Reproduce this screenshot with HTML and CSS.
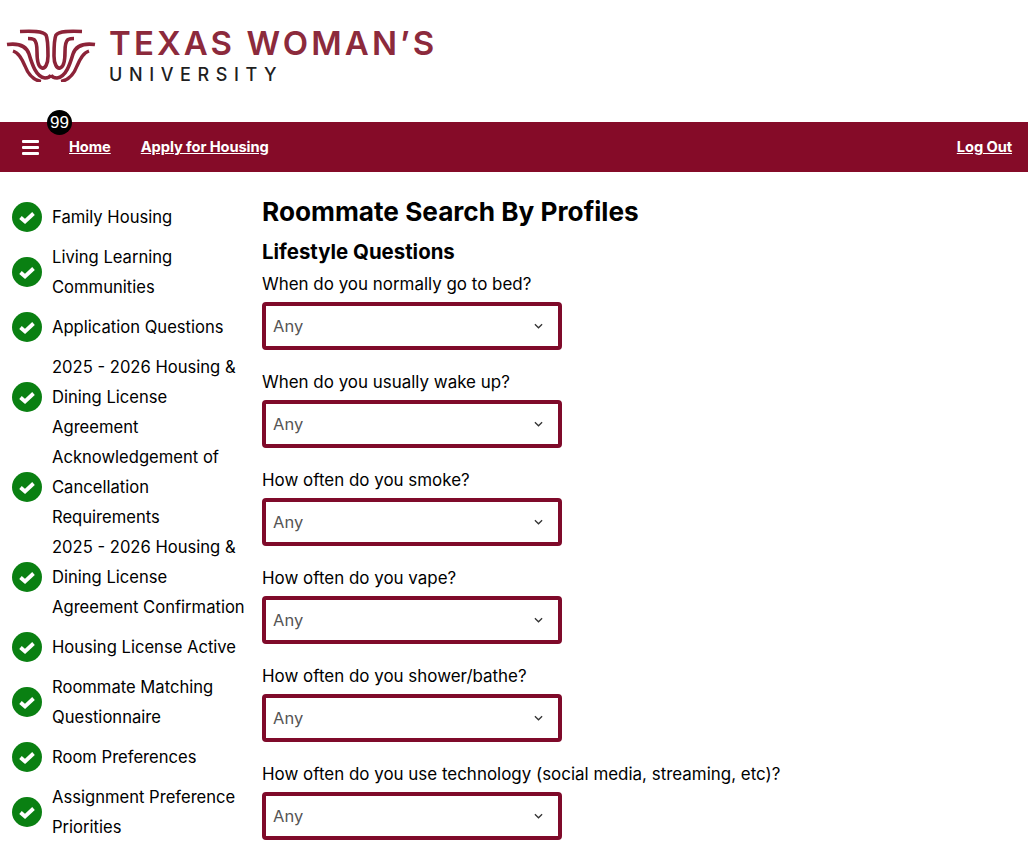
FILE: index.html
```html
<!DOCTYPE html>
<html lang="en">
<head>
<meta charset="utf-8">
<title>Roommate Search By Profiles</title>
<link rel="stylesheet" href="styles.css">
</head>
<body>
<header class="brand">
  <svg class="mark" viewBox="0 0 102 60" width="102" height="60" aria-hidden="true">
    <defs>
      <g id="half" fill="none" stroke="#8c2338" stroke-width="3.600">
        <path d="M20 9.500 C32 9 43 9 46 13 C48 17 48 26 48 34 C48 42 45 47 42 46 C38 45 37 38 37 30 C37 23 36 19 34 17.500 C32 16.500 31 16.500 28 16.500"/>
        <path d="M7 22.500 C18 21 26 23 29 32 C32 42 36 55 45 56 C48 56 50 55 51 53"/>
        <path d="M13 29 C19 31 22 37 25 44 C28 52 33 58 41 59.500" stroke-width="3.400"/>
      </g>
    </defs>
    <use href="#half"/>
    <use href="#half" transform="matrix(-1 0 0 1 102 0)"/>
  </svg>
  <div class="wordmark">
    <div class="wm-top">TEXAS WOMAN’S</div>
    <div class="wm-sub">UNIVERSITY</div>
  </div>
</header>
<nav class="navbar">
  <div class="menu">
    <span class="burger"><i></i><i></i><i></i></span>
    <span class="badge">99</span>
  </div>
  <a class="navlink" href="#">Home</a>
  <a class="navlink" href="#">Apply for Housing</a>
  <a class="navlink logout" href="#">Log Out</a>
</nav>
<div class="layout">
  <aside class="steps">
    <div class="step"><svg class="tick" viewBox="0 0 30 30"><circle cx="15" cy="15" r="15"/><path d="M8.500 15.500l4.500 4 8.500-8"/></svg><span>Family Housing</span></div>
    <div class="step"><svg class="tick" viewBox="0 0 30 30"><circle cx="15" cy="15" r="15"/><path d="M8.500 15.500l4.500 4 8.500-8"/></svg><span>Living Learning Communities</span></div>
    <div class="step"><svg class="tick" viewBox="0 0 30 30"><circle cx="15" cy="15" r="15"/><path d="M8.500 15.500l4.500 4 8.500-8"/></svg><span>Application Questions</span></div>
    <div class="step tight"><svg class="tick" viewBox="0 0 30 30"><circle cx="15" cy="15" r="15"/><path d="M8.500 15.500l4.500 4 8.500-8"/></svg><span>2025 - 2026 Housing &amp; Dining License Agreement</span></div>
    <div class="step tight"><svg class="tick" viewBox="0 0 30 30"><circle cx="15" cy="15" r="15"/><path d="M8.500 15.500l4.500 4 8.500-8"/></svg><span>Acknowledgement of Cancellation Requirements</span></div>
    <div class="step"><svg class="tick" viewBox="0 0 30 30"><circle cx="15" cy="15" r="15"/><path d="M8.500 15.500l4.500 4 8.500-8"/></svg><span>2025 - 2026 Housing &amp; Dining License Agreement Confirmation</span></div>
    <div class="step"><svg class="tick" viewBox="0 0 30 30"><circle cx="15" cy="15" r="15"/><path d="M8.500 15.500l4.500 4 8.500-8"/></svg><span>Housing License Active</span></div>
    <div class="step"><svg class="tick" viewBox="0 0 30 30"><circle cx="15" cy="15" r="15"/><path d="M8.500 15.500l4.500 4 8.500-8"/></svg><span>Roommate Matching Questionnaire</span></div>
    <div class="step"><svg class="tick" viewBox="0 0 30 30"><circle cx="15" cy="15" r="15"/><path d="M8.500 15.500l4.500 4 8.500-8"/></svg><span>Room Preferences</span></div>
    <div class="step"><svg class="tick" viewBox="0 0 30 30"><circle cx="15" cy="15" r="15"/><path d="M8.500 15.500l4.500 4 8.500-8"/></svg><span>Assignment Preference Priorities</span></div>
  </aside>
  <main class="content">
    <h1>Roommate Search By Profiles</h1>
    <h2>Lifestyle Questions</h2>
    <div class="field"><label>When do you normally go to bed?</label><div class="select"><span>Any</span><svg class="chev" viewBox="0 0 10 6"><path d="M1 1l4 4 4-4"/></svg></div></div>
    <div class="field"><label>When do you usually wake up?</label><div class="select"><span>Any</span><svg class="chev" viewBox="0 0 10 6"><path d="M1 1l4 4 4-4"/></svg></div></div>
    <div class="field"><label>How often do you smoke?</label><div class="select"><span>Any</span><svg class="chev" viewBox="0 0 10 6"><path d="M1 1l4 4 4-4"/></svg></div></div>
    <div class="field"><label>How often do you vape?</label><div class="select"><span>Any</span><svg class="chev" viewBox="0 0 10 6"><path d="M1 1l4 4 4-4"/></svg></div></div>
    <div class="field"><label>How often do you shower/bathe?</label><div class="select"><span>Any</span><svg class="chev" viewBox="0 0 10 6"><path d="M1 1l4 4 4-4"/></svg></div></div>
    <div class="field"><label>How often do you use technology (social media, streaming, etc)?</label><div class="select"><span>Any</span><svg class="chev" viewBox="0 0 10 6"><path d="M1 1l4 4 4-4"/></svg></div></div>
  </main>
</div>
</body>
</html>
```
FILE: styles.css
```css
* { box-sizing: border-box; }
html, body { margin: 0; height: 846px; overflow: hidden; background: #fff; }
body { font-family: Inter, "Open Sans", sans-serif; color: #000; }

.brand { height: 122px; display: flex; align-items: flex-start; padding-top: 22px; }
.mark { flex: none; margin-right: 7px; }
.wordmark { padding-top: 4px; }
.wm-top { font-family: Inter, sans-serif; font-weight: 600; font-size: 33px; line-height: 34px; letter-spacing: 3.100px; color: #8c2a3c; white-space: nowrap; }
.wm-sub { font-family: Inter, sans-serif; font-weight: 500; font-size: 18px; line-height: 22px; letter-spacing: 6.600px; color: #1f1f1f; margin-top: 4px; }

.navbar { height: 50px; background: #850b28; display: flex; align-items: center; padding: 0 16px 0 22px; gap: 30px; }
.menu { position: relative; width: 17px; }
.burger { display: flex; flex-direction: column; gap: 3px; }
.burger i { display: block; height: 3px; background: #fff; border-radius: 1px; }
.badge { position: absolute; left: 25px; top: -29.500px; width: 25px; height: 25px; border-radius: 50%; background: #000; color: #fff; font-family: "Liberation Sans", sans-serif; font-size: 17px; line-height: 25px; text-align: center; }
.navlink { color: #fff; font-size: 14.700px; font-weight: 700; letter-spacing: -0.1px; text-decoration: underline; }
.logout { margin-left: auto; }

.layout { display: flex; }
.steps { width: 262px; flex: none; padding: 30px 0 0 12px; }
.step { display: flex; align-items: center; gap: 10px; margin-bottom: 10px; font-size: 16.600px; line-height: 30px; }
.step span { width: 200px; }
.step.tight { margin-bottom: 0; }
.tick { width: 30px; height: 30px; flex: none; }
.tick circle { fill: #0a8012; }
.tick path { fill: none; stroke: #fff; stroke-width: 3.800; }

.content { flex: 1; padding-top: 24px; }
h1 { margin: 0; font-size: 26.200px; line-height: 32px; font-weight: 700; }
h2 { margin: 9px 0 5px; font-size: 20.400px; line-height: 30px; font-weight: 700; }
.field { margin-bottom: 20px; }
.field label { display: block; font-size: 16.950px; line-height: 24px; margin-bottom: 6px; }
.select { width: 300px; height: 48px; border: 4px solid #7f0a2a; border-radius: 4px; display: flex; align-items: center; justify-content: space-between; padding: 0 15px 1px 7px; font-size: 16.500px; color: #555; }
.chev { width: 9px; height: 6px; }
.chev path { fill: none; stroke: #333; stroke-width: 1.400; }
```
